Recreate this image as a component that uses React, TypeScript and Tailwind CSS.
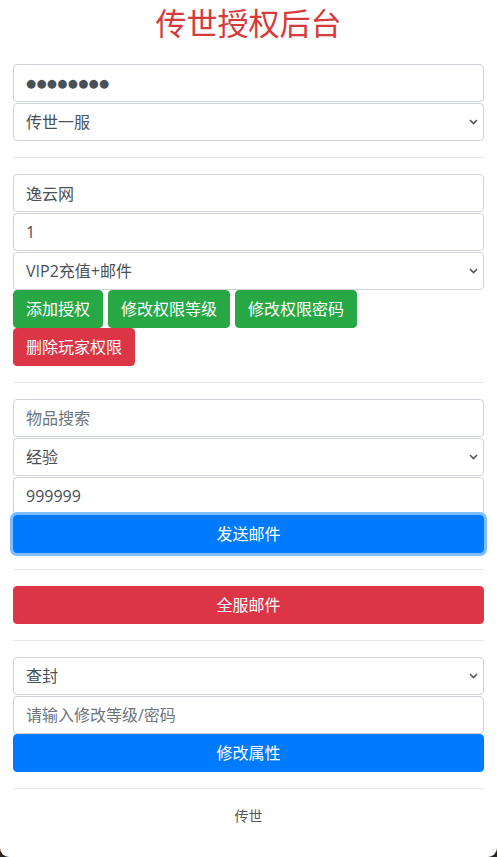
import React from "react";

const field =
  "block w-full h-[38px] border border-[#ced4da] rounded-[4px] bg-white px-3 text-base text-[#495057] placeholder:text-[#6c757d] outline-none";

function Select({ value, options, className = "" }: { value: string; options: string[]; className?: string }) {
  return (
    <div className={`relative ${className}`}>
      <select defaultValue={value} className={`${field} appearance-none pr-8`}>
        {options.map((o) => (
          <option key={o}>{o}</option>
        ))}
      </select>
      <svg
        className="pointer-events-none absolute right-[6px] top-1/2 -translate-y-1/2"
        width="9"
        height="6"
        viewBox="0 0 9 6"
      >
        <polyline points="1,1 4.5,4.5 8,1" fill="none" stroke="#555" strokeWidth="1.6" />
      </svg>
    </div>
  );
}

const btn = "h-[38px] px-3 rounded-[4px] border text-base text-white";

export default function App() {
  return (
    <div className="min-h-[857px] bg-[#2b2118] font-['Open_Sans','Noto_Sans_CJK_SC',sans-serif]">
      <div className="min-h-[857px] bg-white rounded-b-[9px] px-[13px]">
        <h1 className="pt-[5px] text-center text-[31px] leading-[37px] text-[#d63a3a]">传世授权后台</h1>

        <div className="mt-[22px]">
          {/* masked key, drawn with large dots like the reference */}
          <input
            type="text"
            readOnly
            defaultValue="●●●●●●●●"
            className={`${field} font-['DejaVu_Sans',sans-serif] text-[11.5px] tracking-[0.4px]`}
          />
          <Select className="mt-px" value="传世一服" options={["传世一服", "传世二服"]} />
        </div>

        <hr className="my-4 border-0 border-t border-[#e6e6e6]" />

        <div>
          <input type="text" defaultValue="逸云网" className={field} />
          <input type="text" defaultValue="1" className={`${field} mt-px`} />
          <Select className="mt-px" value="VIP2充值+邮件" options={["VIP1充值", "VIP2充值+邮件"]} />
          <div className="flex flex-wrap gap-x-[5px]">
            <button className={`${btn} bg-[#28a745] border-[#28a745]`}>添加授权</button>
            <button className={`${btn} bg-[#28a745] border-[#28a745]`}>修改权限等级</button>
            <button className={`${btn} bg-[#28a745] border-[#28a745]`}>修改权限密码</button>
            <button className={`${btn} bg-[#dc3545] border-[#dc3545]`}>删除玩家权限</button>
          </div>
        </div>

        <hr className="my-4 border-0 border-t border-[#e6e6e6]" />

        <div>
          <input type="text" placeholder="物品搜索" className={field} />
          <Select className="mt-px" value="经验" options={["经验", "元宝"]} />
          <input type="text" defaultValue="999999" className={`${field} mt-px`} />
          <button className={`${btn} w-full bg-[#007bff] border-[#007bff] ring-[3px] ring-[#80bdff]`}>发送邮件</button>
        </div>

        <hr className="my-4 border-0 border-t border-[#e6e6e6]" />

        <button className={`${btn} w-full bg-[#dc3545] border-[#dc3545]`}>全服邮件</button>

        <hr className="my-4 border-0 border-t border-[#e6e6e6]" />

        <div>
          <Select value="查封" options={["查封", "解封"]} />
          <input type="text" placeholder="请输入修改等级/密码" className={`${field} mt-px`} />
          <button className={`${btn} w-full bg-[#007bff] border-[#007bff]`}>修改属性</button>
        </div>

        <hr className="my-4 border-0 border-t border-[#e6e6e6]" />

        <p className="text-center text-sm leading-[21px] text-[#555]">传世</p>
      </div>
    </div>
  );
}
